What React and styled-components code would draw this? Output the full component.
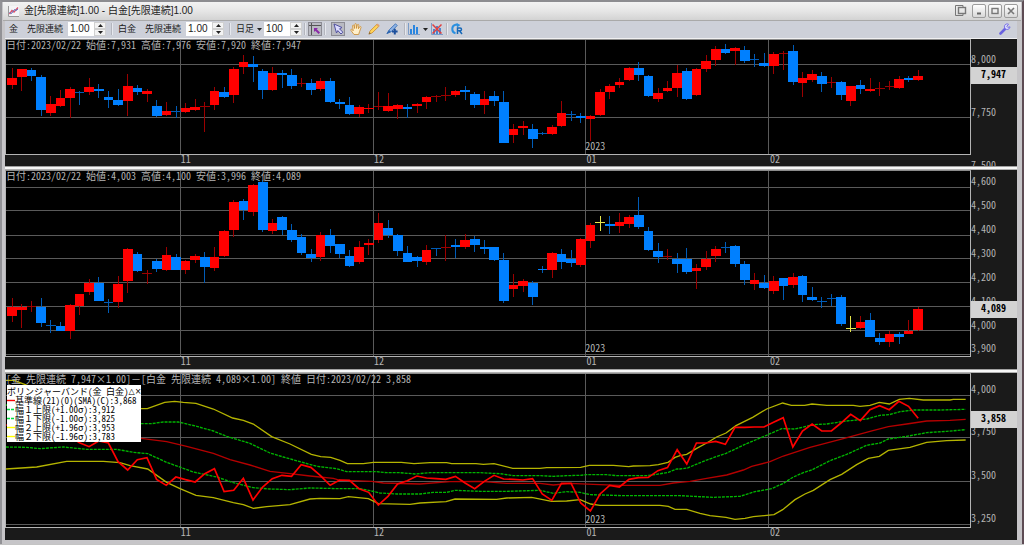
import React, { useState } from 'react';
import styled, { createGlobalStyle } from 'styled-components';

const UP = '#ff0000';
const DOWN = '#0080ff';
const FLAT = '#e6e64a';
const WICK = { [UP]: '#9c0000', [DOWN]: '#005cb8', [FLAT]: '#e6e64a' };

// chart units: three per pixel
const LEFT = 18;
const SPAN = 2892;
const FIRST = 36;
const STEP = 28.92;
const CHUNK = 1020;

const months = [
  { x: 541, label: '11' },
  { x: 1120, label: '12' },
  { x: 1756, label: '01', year: '2023' },
  { x: 2305, label: '02' },
];

// colour, high, body top, body bottom, low
const gold = [
  'r 97 127 146 160', 'r 98 100 124 166', 'b 96 101 119 134', 'b 117 122 222 241', 'r 181 203 230 240',
  'r 162 186 209 212', 'r 152 158 185 245', 'b 164 168 171 207', 'r 127 153 169 176', 'b 143 158 165 186',
  'b 166 183 192 217', 'b 160 192 207 210', 'r 115 149 195 240', 'b 148 155 169 178', 'r 160 166 174 199',
  'b 192 210 240 243', 'r 198 224 238 240', 'b 210 225 228 245', 'r 200 217 228 232', 'r 188 214 221 224',
  'r 198 210 213 287', 'r 152 165 207 221', 'b 153 167 183 187', 'r 94 99 178 200', 'r 57 78 94 115',
  'b 59 85 94 138', 'b 100 104 162 188', 'r 92 111 162 164', 'b 102 111 117 156', 'b 99 118 150 158',
  'r 125 141 143 154', 'b 129 142 162 177', 'r 125 135 160 166', 'b 126 135 198 202', 'b 188 198 204 220',
  'b 183 207 234 237', 'r 206 212 235 243', 'r 204 215 220 231', 'r 167 210 213 222', 'r 172 209 225 228',
  'r 204 206 219 250', 'b 204 212 220 245', 'r 200 203 210 231', 'r 179 183 198 219', 'r 176 181 184 199',
  'r 153 178 181 196', 'r 161 165 178 182', 'b 151 162 169 191', 'b 167 174 207 216', 'r 164 189 207 234',
  'b 166 181 196 211', 'b 165 198 320 321', 'r 264 279 298 320', 'r 255 270 277 297', 'b 263 280 308 336',
  'b 287 291 294 298', 'r 267 274 293 297', 'r 196 232 270 272', 'b 224 233 236 256', 'b 230 240 247 262',
  'r 238 240 249 316', 'r 158 167 238 240', 'r 144 149 167 189', 'r 127 139 146 157', 'r 93 96 133 136',
  'b 78 97 117 136', 'b 118 121 181 182', 'r 155 171 188 199', 'r 136 157 166 168', 'r 87 111 157 183',
  'b 97 105 188 191', 'r 96 99 178 180', 'r 57 75 100 107', 'r 31 40 72 90', 'b 24 38 51 54',
  'r 33 35 45 86', 'b 31 42 74 80', 'b 55 70 73 92', 'b 51 80 91 94', 'r 48 54 91 115',
  'r 45 51 54 103', 'b 28 45 138 148', 'r 108 126 140 182', 'r 101 113 131 137', 'b 109 120 145 167',
  'r 124 137 140 155', 'b 135 137 176 192', 'r 149 151 194 211', 'b 132 148 159 174', 'r 127 160 165 167',
  'r 139 155 158 181', 'r 134 150 153 161', 'r 121 129 155 159', 'b 121 126 132 137', 'r 102 121 131 136',
];

const platinum = [
  'r 398 426 452 470', 'r 417 426 435 488', 'r 409 424 426 440', 'b 398 426 473 487', 'b 466 480 483 504',
  'b 471 483 497 498', 'r 418 420 497 521', 'r 387 388 424 449', 'r 341 353 381 391', 'b 337 353 407 408',
  'b 402 411 413 443', 'r 332 358 411 428', 'r 250 252 347 383', 'b 261 268 317 321', 'r 315 324 326 358',
  'b 282 287 312 321', 'r 247 270 315 319', 'b 266 275 315 316', 'r 286 287 315 328', 'r 266 273 285 293',
  'b 261 277 305 353', 'r 247 275 308 319', 'r 194 199 272 277', 'r 106 111 195 215', 'b 101 108 136 165',
  'r 58 61 140 154', 'b 45 52 196 201', 'r 162 174 199 207', 'b 154 157 195 211', 'b 177 195 225 230',
  'b 208 216 265 269', 'b 251 267 280 290', 'r 202 211 275 288', 'b 191 210 244 265', 'b 236 238 268 280',
  'b 256 273 304 307', 'r 229 245 291 297', 'r 223 234 240 270', 'r 145 174 226 234', 'b 165 190 210 220',
  'b 207 211 258 274', 'b 244 264 290 291', 'b 273 276 289 307', 'r 241 256 291 301', 'b 248 249 252 274',
  'r 210 246 249 288', 'b 221 240 247 279', 'r 208 224 246 252', 'b 213 222 240 262', 'b 226 247 252 266',
  'b 246 247 285 289', 'b 263 285 409 415', 'r 327 360 371 396', 'r 341 348 364 380', 'b 348 354 395 420',
  'b 303 311 316 323', 'r 262 264 315 338', 'b 251 266 290 312', 'b 256 281 293 305', 'r 219 223 300 305',
  'r 174 179 227 250', 'y 154 171 174 197', 'b 153 177 183 207', 'r 145 172 183 205', 'r 150 155 178 190',
  'b 96 151 185 193', 'b 185 197 254 257', 'b 234 258 275 293', 'r 252 273 275 284', 'b 263 282 296 323',
  'b 249 281 320 328', 'r 297 309 319 372', 'r 258 282 307 314', 'r 244 251 272 291', 'b 230 246 248 265',
  'b 240 243 298 305', 'b 289 298 345 359', 'r 325 345 357 376', 'b 329 354 369 373', 'r 332 349 379 387',
  'b 338 339 364 406', 'r 324 336 361 369', 'b 331 332 390 411', 'b 365 396 406 408', 'b 396 408 410 430',
  'b 386 399 402 424', 'b 391 395 477 482', 'y 454 489 492 500', 'r 454 471 489 493', 'b 445 466 515 517',
  'b 504 519 532 539', 'r 498 507 532 545', 'b 502 507 515 536', 'r 466 498 506 508', 'r 425 433 494 498',
];

// spread close, one value per session
const spread = [
  150, 160, 155, 170, 190, 200, 215, 233, 245, 228, 234, 290, 315, 284, 278, 343, 361, 336, 344, 351,
  326, 311, 380, 376, 340, 405, 366, 341, 331, 334, 299, 307, 332, 361, 345, 346, 371, 382, 420, 394,
  357, 347, 333, 339, 341, 343, 334, 354, 371, 349, 331, 342, 343, 345, 341, 387, 406, 355, 355, 414,
  438, 387, 361, 366, 343, 338, 337, 317, 308, 254, 297, 234, 234, 229, 238, 187, 187, 186, 186, 172,
  158, 246, 198, 177, 198, 198, 174, 148, 167, 134, 122, 134, 109, 124, 160,
];

// every row of points starts one CHUNK further right
const bands = [
  {
    color: '#b4b400',
    rows: [
      '18,46 42,46 80,60 200,110 300,135 423,131 442,131 494,112 524,109 550,112 588,115 640,132 698,159 730,166 760,177 815,215 870,237 934,268 962,275 992,277',
      '0,286 22,296 70,296 100,292 184,292 222,296 270,293 320,293 335,296 408,296 430,298 462,296 518,310 600,310 620,308 722,307 748,301 820,301 866,305 880,303 930,302 955,299 984,292 1005,277',
      '0,272 20,268 50,250 80,234 110,216 138,204 168,182 218,157 260,132 308,114 334,121 374,121 396,117 440,121 520,121 540,124 570,121 598,112 628,117 658,103 688,100 730,105 810,105 820,103 857,103',
    ],
  },
  {
    color: '#00b400',
    dash: '9 3',
    rows: [
      '18,120 200,150 423,176 455,176 490,171 535,171 590,184 640,198 680,214 750,235 810,264 850,276 900,290 950,304 1010,311',
      '20,320 110,320 140,323 180,323 225,327 270,323 420,323 480,326 520,332 600,332 640,334 680,332 720,331 740,329 800,329 830,332 920,332 950,328 985,322 1010,312',
      '0,312 22,309 80,285 138,265 200,236 250,215 305,191 345,192 400,179 440,177 500,168 560,162 600,151 628,149 660,140 700,135 780,135 857,133',
    ],
  },
  {
    color: '#b40000',
    rows: [
      '18,180 200,200 423,220 500,230 560,244 640,265 690,284 750,300 810,319 870,326 930,333 1000,340',
      '0,346 40,347 95,349 130,354 240,357 330,350 420,349 500,355 600,355 640,360 690,355 760,358 840,361 960,361 1000,354',
      '0,352 30,349 80,340 140,330 190,315 215,304 270,290 310,273 390,247 490,221 570,199 625,185 680,177 740,168 810,166 857,163',
    ],
  },
  {
    color: '#00b400',
    dash: '9 3',
    rows: [
      '18,246 80,247 120,251 190,246 260,253 350,253 400,262 443,266 500,292 580,321 650,336 700,353 760,368 810,372 870,374 930,369',
      '0,371 60,371 90,377 120,384 170,387 240,387 280,382 320,382 345,376 420,379 500,379 600,376 640,385 680,380 720,382 750,389 850,392',
      '0,392 100,397 180,394 225,380 275,371 310,355 340,336 370,323 395,315 450,287 500,268 560,241 600,234 625,222 680,214 740,203 800,199 857,194',
    ],
  },
  {
    color: '#b4b400',
    rows: [
      '18,312 110,306 200,289 310,289 360,293 390,302 443,312 500,352 540,371 588,391 640,398 700,413 730,419 760,430 800,425 870,419 930,402 960,400',
      '0,401 25,395 85,401 115,416 210,418 240,414 318,410 345,402 470,403 500,399 575,397 635,409 680,408 720,404 752,417 780,421 960,421 985,424 1005,433',
      '20,433 60,445 90,452 138,457 165,463 195,460 220,455 282,449 308,434 345,404 375,387 400,376 450,344 485,328 530,299 565,280 598,274 625,256 690,247 740,232 800,227 857,225',
    ],
  },
];

const legend = [
  { color: '#ff0000', text: '基準線(21)(0)(SMA)(C):3,868' },
  { color: '#00e040', dash: '3 1', text: '幅１上限(+1.00σ):3,912' },
  { color: '#00e040', dash: '3 1', text: '幅１下限(-1.00σ):3,825' },
  { color: '#ffff00', text: '幅２上限(+1.96σ):3,953' },
  { color: '#ffff00', text: '幅２下限(-1.96σ):3,783' },
];

const goldScale = {
  top: 12,
  height: 114,
  axis: 11,
  last: 121,
  price: '7,947',
  ticks: [[86, '8,000'], [245, '7,750'], [405, '7,500']],
};
const platinumScale = {
  top: 18,
  height: 185,
  axis: 12,
  last: 434,
  price: '4,089',
  ticks: [[66, '4,600'], [137, '4,500'], [210, '4,400'], [281, '4,300'], [353, '4,200'], [425, '4,100'], [497, '4,000'], [568, '3,900']],
};
const spreadScale = {
  top: 27,
  height: 153,
  axis: 12,
  last: 164,
  price: '3,858',
  ticks: [[91, '4,000'], [217, '3,750'], [348, '3,500'], [477, '3,250']],
};

const joinRows = (rows) =>
  rows
    .map((row, i) =>
      row
        .split(' ')
        .map((point) => {
          const [x, y] = point.split(',').map(Number);
          return `${x + i * CHUNK},${y}`;
        })
        .join(' ')
    )
    .join(' ');

const percentX = (x) => `${((x - LEFT) / SPAN) * 100}%`;

const Candles = ({ data }) => (
  <g shapeRendering="crispEdges">
    {data.map((row, i) => {
      const [kind, ...rest] = row.split(' ');
      const [high, top, bottom, low] = rest.map(Number);
      const color = kind === 'r' ? UP : kind === 'b' ? DOWN : FLAT;
      const x = FIRST + i * STEP;
      const thin = bottom - top <= 3;
      return (
        <g key={i}>
          <rect x={x - 1} y={high} width={3} height={low - high} fill={WICK[color]} />
          <rect x={x - 14} y={top} width={STEP} height={thin ? 3 : bottom - top} fill={thin ? WICK[color] : color} />
        </g>
      );
    })}
  </g>
);

const SpreadLines = () => (
  <g fill="none">
    {bands.map((band, i) => (
      <polyline key={i} points={joinRows(band.rows)} stroke={band.color} strokeWidth={4} strokeDasharray={band.dash} />
    ))}
    <polyline points={spread.map((y, i) => `${FIRST + i * STEP},${y}`).join(' ')} stroke="#ff0000" strokeWidth={5} />
  </g>
);

const ChartPane = ({ scale, caption, children, overlay }) => (
  <Pane>
    <PlotColumn>
      <Plot>
        <PlotSvg height={scale.height}>
          <svg viewBox={`${LEFT} ${scale.top} ${SPAN} ${scale.height * 3}`} width="100%" height="100%" preserveAspectRatio="none">
            <g stroke="#5a5a5a" strokeWidth={3} shapeRendering="crispEdges">
              {scale.ticks.map(([y]) => (
                <line key={y} x1={LEFT} x2={LEFT + SPAN} y1={y} y2={y} />
              ))}
              {months.map(({ x }) => (
                <line key={x} x1={x} x2={x} y1={scale.top} y2={scale.top + scale.height * 3} />
              ))}
            </g>
            {children}
          </svg>
          <ChartText x="0" y="9">{caption}</ChartText>
          {months.filter((m) => m.year).map((m) => (
            <ChartText key={m.year} x={percentX(m.x)} y={scale.height - 4}>{m.year}</ChartText>
          ))}
        </PlotSvg>
        {overlay}
      </Plot>
      <TimeAxis height={scale.axis}>
        {months.map((m) => (
          <ChartText key={m.label} x={percentX(m.x)} dx="1" y="8">{m.label}</ChartText>
        ))}
      </TimeAxis>
    </PlotColumn>
    <PriceScale height={scale.height + scale.axis + 2}>
      {scale.ticks.map(([y, label]) => (
        <ChartText key={label} x="0" y={Math.round((y - scale.top) / 3) - 1}>{label}</ChartText>
      ))}
      <rect x="0" y={Math.round((scale.last - scale.top) / 3) - 8} width="100%" height="17" fill="#d3d3d3" />
      <PriceText x="10" y={Math.round((scale.last - scale.top) / 3) + 3}>{scale.price}</PriceText>
    </PriceScale>
  </Pane>
);

const Spinner = ({ label, initial, step, digits }) => {
  const [value, setValue] = useState(initial);
  const change = (delta) => setValue((v) => (Number(v) + delta).toFixed(digits));

  return (
    <SpinnerBox>
      <SpinnerInput aria-label={label} value={value} onChange={(e) => setValue(e.target.value)} />
      <SpinnerButtons>
        <StepButton aria-label={`${label} +`} onClick={() => change(step)}>
          <svg width="5" height="3"><path d="M0 3L2.5 0L5 3Z" fill="#222" /></svg>
        </StepButton>
        <StepButton aria-label={`${label} -`} onClick={() => change(-step)}>
          <svg width="5" height="3"><path d="M0 0L2.5 3L5 0Z" fill="#222" /></svg>
        </StepButton>
      </SpinnerButtons>
    </SpinnerBox>
  );
};

const DropArrow = () => (
  <svg width="5" height="3"><path d="M0 0H5L2.5 3Z" fill="#222" /></svg>
);

const App = () => {
  const [tool, setTool] = useState('select');
  const [legendOpen, setLegendOpen] = useState(true);

  return (
    <Frame>
      <GlobalStyle />
      <TitleBar>
        <svg width="11" height="11" viewBox="0 0 11 11">
          <rect width="11" height="11" fill="#f4f4f6" />
          <path d="M0.5 0V10.5H11" fill="none" stroke="#999" />
          <path d="M1.5 8L4 4.5L6 6L10 1.5" fill="none" stroke="#e05068" strokeWidth="1.3" />
          <path d="M1.5 6.5L3.5 7.5L6.5 3.5L8 4.5L10 3" fill="none" stroke="#5578c8" />
        </svg>
        <WindowTitle>金[先限連続]1.00 - 白金[先限連続]1.00</WindowTitle>
        <FloatButton aria-label="別ウィンドウ">
          <svg width="12" height="12" viewBox="0 0 12 12" fill="none" stroke="#777">
            <path d="M8 2.5V0.5H0.5V10.5H8V9" />
            <rect x="3.5" y="2.5" width="7" height="6" strokeWidth="1.4" />
          </svg>
        </FloatButton>
        <WindowButtons>
          <WindowButton aria-label="最小化">
            <svg width="10" height="10" viewBox="0 0 10 10"><path d="M3 7.5H7" stroke="#666" strokeWidth="2" /></svg>
          </WindowButton>
          <WindowButton aria-label="最大化">
            <svg width="10" height="10" viewBox="0 0 10 10"><rect x="2" y="2.5" width="6" height="5" fill="none" stroke="#777" strokeWidth="1.4" /></svg>
          </WindowButton>
          <WindowButton aria-label="閉じる">
            <svg width="10" height="10" viewBox="0 0 10 10"><path d="M2 2L8 8M8 2L2 8" stroke="#777" strokeWidth="1.6" /></svg>
          </WindowButton>
        </WindowButtons>
      </TitleBar>

      <Toolbar>
        <ToolGroup>
          <span>金</span>
          <span>先限連続</span>
        </ToolGroup>
        <Spinner label="金 倍率" initial="1.00" step={0.01} digits={2} />
        <Divider />
        <ToolGroup>
          <span>白金</span>
          <span>先限連続</span>
        </ToolGroup>
        <Spinner label="白金 倍率" initial="1.00" step={0.01} digits={2} />
        <Divider />
        <ToolStrip>
          <DropButton>日足 <DropArrow /></DropButton>
          <Spinner label="本数" initial="100" step={1} digits={0} />
          <Divider />
          <ToolButton aria-label="十字線" $pressed>
            <svg width="12" height="12" viewBox="0 0 12 12">
              <path d="M0 2.5H12M2.5 0V12" stroke="#555" />
              <path d="M5 5H9L7.7 6.3L11 9.6L9.6 11L6.3 7.7L5 9Z" fill="#8a2aa6" />
            </svg>
          </ToolButton>
          <Divider />
          <IconGroup>
            <ToolButton aria-label="選択" $pressed={tool === 'select'} onClick={() => setTool('select')}>
              <svg width="12" height="12" viewBox="0 0 12 12">
                <path d="M2 1L10 4.5L7.5 5.8L10.8 9.2L9 11L5.8 7.6L4.5 10Z" fill="#dcdcff" stroke="#5050a0" />
              </svg>
            </ToolButton>
            <ToolButton aria-label="手のひら" $pressed={tool === 'hand'} onClick={() => setTool('hand')}>
              <svg width="12" height="12" viewBox="0 0 12 12">
                <path d="M4 11.5L1 7.5C0.3 6.3 1.5 5.8 2.2 6.6L3.2 7.8L2.6 3C2.5 1.8 3.8 1.7 4 2.8L4.6 5.5L4.8 1.5C4.9 0.3 6.3 0.3 6.4 1.5L6.5 5.4L7.3 2C7.6 0.9 8.9 1.2 8.8 2.3L8.4 5.8L9.6 3.9C10.2 3 11.4 3.6 11 4.6L9.6 8.5L8.6 11.5Z" fill="#fff0cc" stroke="#c98a2e" strokeWidth="0.8" />
              </svg>
            </ToolButton>
            <ToolButton aria-label="鉛筆" $pressed={tool === 'pencil'} onClick={() => setTool('pencil')}>
              <svg width="12" height="12" viewBox="0 0 12 12">
                <path d="M1 11L2 8L9 1.2L11 3.2L4 10Z" fill="#ffd45a" stroke="#c98a2e" strokeWidth="0.8" />
                <path d="M9 1.2L11 3.2" stroke="#e0a070" strokeWidth="2" />
                <path d="M0.6 11.4L1.5 9L3 10.5Z" fill="#8a6a3a" />
              </svg>
            </ToolButton>
            <ToolButton aria-label="マーカー" $pressed={tool === 'marker'} onClick={() => setTool('marker')}>
              <svg width="12" height="12" viewBox="0 0 12 12">
                <path d="M1 10.5L3.5 6.5L9.5 0.8L11.2 2.5L5.5 8.5Z" fill="#8fb4e6" stroke="#2f66b0" strokeWidth="0.8" />
                <path d="M0.3 11L3 7L5 9Z" fill="#2f66b0" />
                <path d="M8.8 5.8V11.4M6 8.6H11.6" stroke="#1d4f9c" strokeWidth="2" />
              </svg>
            </ToolButton>
          </IconGroup>
          <Divider />
          <DropButton aria-label="指標">
            <svg width="12" height="12" viewBox="0 0 12 12">
              <path d="M0.5 0V11.5H12" fill="none" stroke="#7a9cc8" />
              <path d="M2 11V6H4V11ZM5 11V2H7V11ZM8 11V4H10V11Z" fill="#2a86e0" />
            </svg>
            <DropArrow />
          </DropButton>
          <ToolButton aria-label="指標を消去">
            <svg width="12" height="12" viewBox="0 0 12 12">
              <path d="M0.5 0V11.5H12" fill="none" stroke="#7a9cc8" />
              <path d="M2 11V6H4V11ZM5 11V3H7V11ZM8 11V5H10V11Z" fill="#4a86d0" />
              <path d="M1.5 1.5L10.5 10.5M10.5 1.5L1.5 10.5" stroke="#e04040" strokeWidth="1.5" />
            </svg>
          </ToolButton>
          <Divider />
          <ToolButton aria-label="更新">
            <svg width="12" height="12" viewBox="0 0 12 12" fill="none">
              <path d="M7 1.8H4.5C0.2 2.8 0.2 9 4.5 10.4" stroke="#2a90e0" strokeWidth="2" />
              <path d="M5.5 0L9.5 2L6 4.5Z" fill="#2a90e0" />
              <path d="M6.5 11V5H9Q10.5 5 10.5 6.4Q10.5 7.8 9 7.8H7M8.5 7.8L11 11" stroke="#1668b8" strokeWidth="1.5" />
            </svg>
          </ToolButton>
        </ToolStrip>
        <SettingsButton aria-label="設定">
          <svg width="12" height="12" viewBox="0 0 12 12" fill="none">
            <path d="M1.5 10.5L6.5 5.5" stroke="#6a62e0" strokeWidth="2.6" strokeLinecap="round" />
            <path d="M9.5 1.2A2.8 2.8 0 1 0 11 3.8L8.8 4.4L7.8 3.4Z" fill="#dcdcff" stroke="#7a72e6" />
          </svg>
        </SettingsButton>
      </Toolbar>

      <ChartPane scale={goldScale} caption="日付:2023/02/22 始値:7,931 高値:7,976 安値:7,920 終値:7,947">
        <Candles data={gold} />
      </ChartPane>
      <Splitter />
      <ChartPane scale={platinumScale} caption="日付:2023/02/22 始値:4,003 高値:4,100 安値:3,996 終値:4,089">
        <Candles data={platinum} />
      </ChartPane>
      <Splitter />
      <ChartPane
        scale={spreadScale}
        caption="[金 先限連続 7,947×1.00]－[白金 先限連続 4,089×1.00] 終値 日付:2023/02/22 3,858"
        overlay={legendOpen && (
          <Legend>
            <LegendHeader>
              ボリンジャーバンド(金 白金)
              <LegendButton>△</LegendButton>
              <LegendButton onClick={() => setLegendOpen(false)}>×</LegendButton>
            </LegendHeader>
            {legend.map((item) => (
              <LegendRow key={item.text}>
                <svg width="8" height="3"><path d="M0 1.5H8" stroke={item.color} strokeWidth="1.4" strokeDasharray={item.dash} /></svg>
                {item.text}
              </LegendRow>
            ))}
          </Legend>
        )}
      >
        <SpreadLines />
      </ChartPane>
    </Frame>
  );
};

export default App;

const GlobalStyle = createGlobalStyle`
  body {
    margin: 0;
    background: #c4c4c4;
  }

  * {
    box-sizing: border-box;
  }

  button, input {
    font: inherit;
    color: inherit;
    margin: 0;
    padding: 0;
  }

  svg {
    display: block;
    flex: none;
  }
`;

const Frame = styled.main`
  display: flex;
  flex-direction: column;
  border-top: 2px solid #8c8c90;
  border-left: 2px solid #929296;
  border-right: 2px solid #5e4c54;
  padding: 0 5px 4px 3px;
  background: #c6c5c8;
  font-family: 'Liberation Sans Narrow', 'Liberation Sans', 'Noto Sans CJK JP', sans-serif;
  font-size: 10px;
  color: #222;
`;

const TitleBar = styled.header`
  display: flex;
  align-items: center;
  height: 19px;
  margin: 0 -4px 0 -2px;
  padding: 0 3px 0 5px;
  gap: 5px;
  background: linear-gradient(#f2f2f2, #e6e6e6 50%, #d3d3d3);
  border-bottom: 1px solid #a9a9a9;
`;

const WindowTitle = styled.h1`
  flex: 1;
  margin: 0;
  font-size: 10px;
  font-weight: normal;
  line-height: 16px;
  white-space: nowrap;
`;

const FloatButton = styled.button`
  border: none;
  background: none;
`;

const WindowButtons = styled.div`
  display: flex;
  gap: 2px;
`;

const WindowButton = styled.button`
  display: flex;
  align-items: center;
  justify-content: center;
  width: 14px;
  height: 14px;
  border: 1px solid #9c9c9c;
  border-radius: 2px;
  background: linear-gradient(#fff, #d8d8d8);
`;

const Toolbar = styled.div`
  display: flex;
  align-items: center;
  height: 18px;
  gap: 5px;
  padding: 0 5px 1px 4px;
  background: #cdd0d9;
  border-bottom: 1px solid #f0f0f2;
  font-size: 9px;
  line-height: 15px;
  white-space: nowrap;
`;

const ToolGroup = styled.div`
  display: flex;
  gap: 9px;
`;

const ToolStrip = styled.div`
  display: flex;
  align-items: center;
  gap: 2px;
`;

const SpinnerBox = styled.div`
  display: flex;
  width: 38px;
  height: 14px;
  background: #fff;
`;

const SpinnerInput = styled.input`
  flex: 1;
  min-width: 0;
  padding-left: 2px;
  border: none;
  background: none;
  font-size: 10px;
  line-height: 12px;
`;

const SpinnerButtons = styled.div`
  display: flex;
  flex-direction: column;
  width: 12px;
`;

const StepButton = styled.button`
  display: flex;
  flex: 1;
  align-items: center;
  justify-content: center;
  border: 1px solid #d0d0d0;
  background: #f3f3f3;
`;

const Divider = styled.span`
  width: 2px;
  height: 12px;
  border-left: 1px solid #b4b6be;
  border-right: 1px solid #e6e8ee;
`;

const DropButton = styled.button`
  display: flex;
  align-items: center;
  gap: 3px;
  border: none;
  background: none;
`;

const IconGroup = styled.div`
  display: flex;
  gap: 4px;
  padding: 0 3px;
`;

const ToolButton = styled.button`
  display: flex;
  align-items: center;
  justify-content: center;
  width: 14px;
  height: 14px;
  border: 1px solid ${(props) => (props.$pressed ? '#8c8c94' : 'transparent')};
  background: ${(props) => (props.$pressed ? '#b9bac2' : 'none')};
`;

const SettingsButton = styled(ToolButton)`
  margin-left: auto;
`;

const Pane = styled.section`
  display: grid;
  grid-template-columns: minmax(0, 1fr) 46px;
  background: #1a1a1a;
`;

const PlotColumn = styled.div`
  display: flex;
  flex-direction: column;
`;

const Plot = styled.div`
  position: relative;
  border: 1px solid #b4b4b4;
  border-top-color: #8a8a8a;
  background: #000;
`;

const PlotSvg = styled.svg`
  width: 100%;
`;

const TimeAxis = styled.svg`
  width: 100%;
`;

const PriceScale = styled.svg`
  width: 100%;
  overflow: hidden;
`;

const ChartText = styled.text`
  font-family: 'Noto Sans Mono CJK JP', 'Liberation Sans Narrow', 'Liberation Sans', 'Noto Sans CJK JP', monospace;
  font-size: 10px;
  fill: #b4b4b4;
  white-space: pre;
`;

const PriceText = styled(ChartText)`
  font-weight: bold;
  fill: #000;
`;

const Splitter = styled.div`
  height: 4px;
  border-top: 1px solid #a0a0a0;
  border-bottom: 1px solid #b0b0b0;
  background: #f6f6f6;
`;

const Legend = styled.div`
  position: absolute;
  top: 11px;
  left: 1px;
  padding: 1px 0;
  background: #fff;
  color: #000;
  font-family: 'Noto Sans Mono CJK JP', 'Liberation Sans', 'Noto Sans CJK JP', monospace;
  font-size: 9px;
  line-height: 9px;
  white-space: nowrap;
`;

const LegendHeader = styled.div`
  display: flex;
  align-items: center;
  height: 10px;
`;

const LegendButton = styled.button`
  border: none;
  background: none;
  font-family: 'DejaVu Sans', sans-serif;
  font-size: 8px;
  line-height: 9px;
`;

const LegendRow = styled.div`
  display: flex;
  align-items: center;
`;
